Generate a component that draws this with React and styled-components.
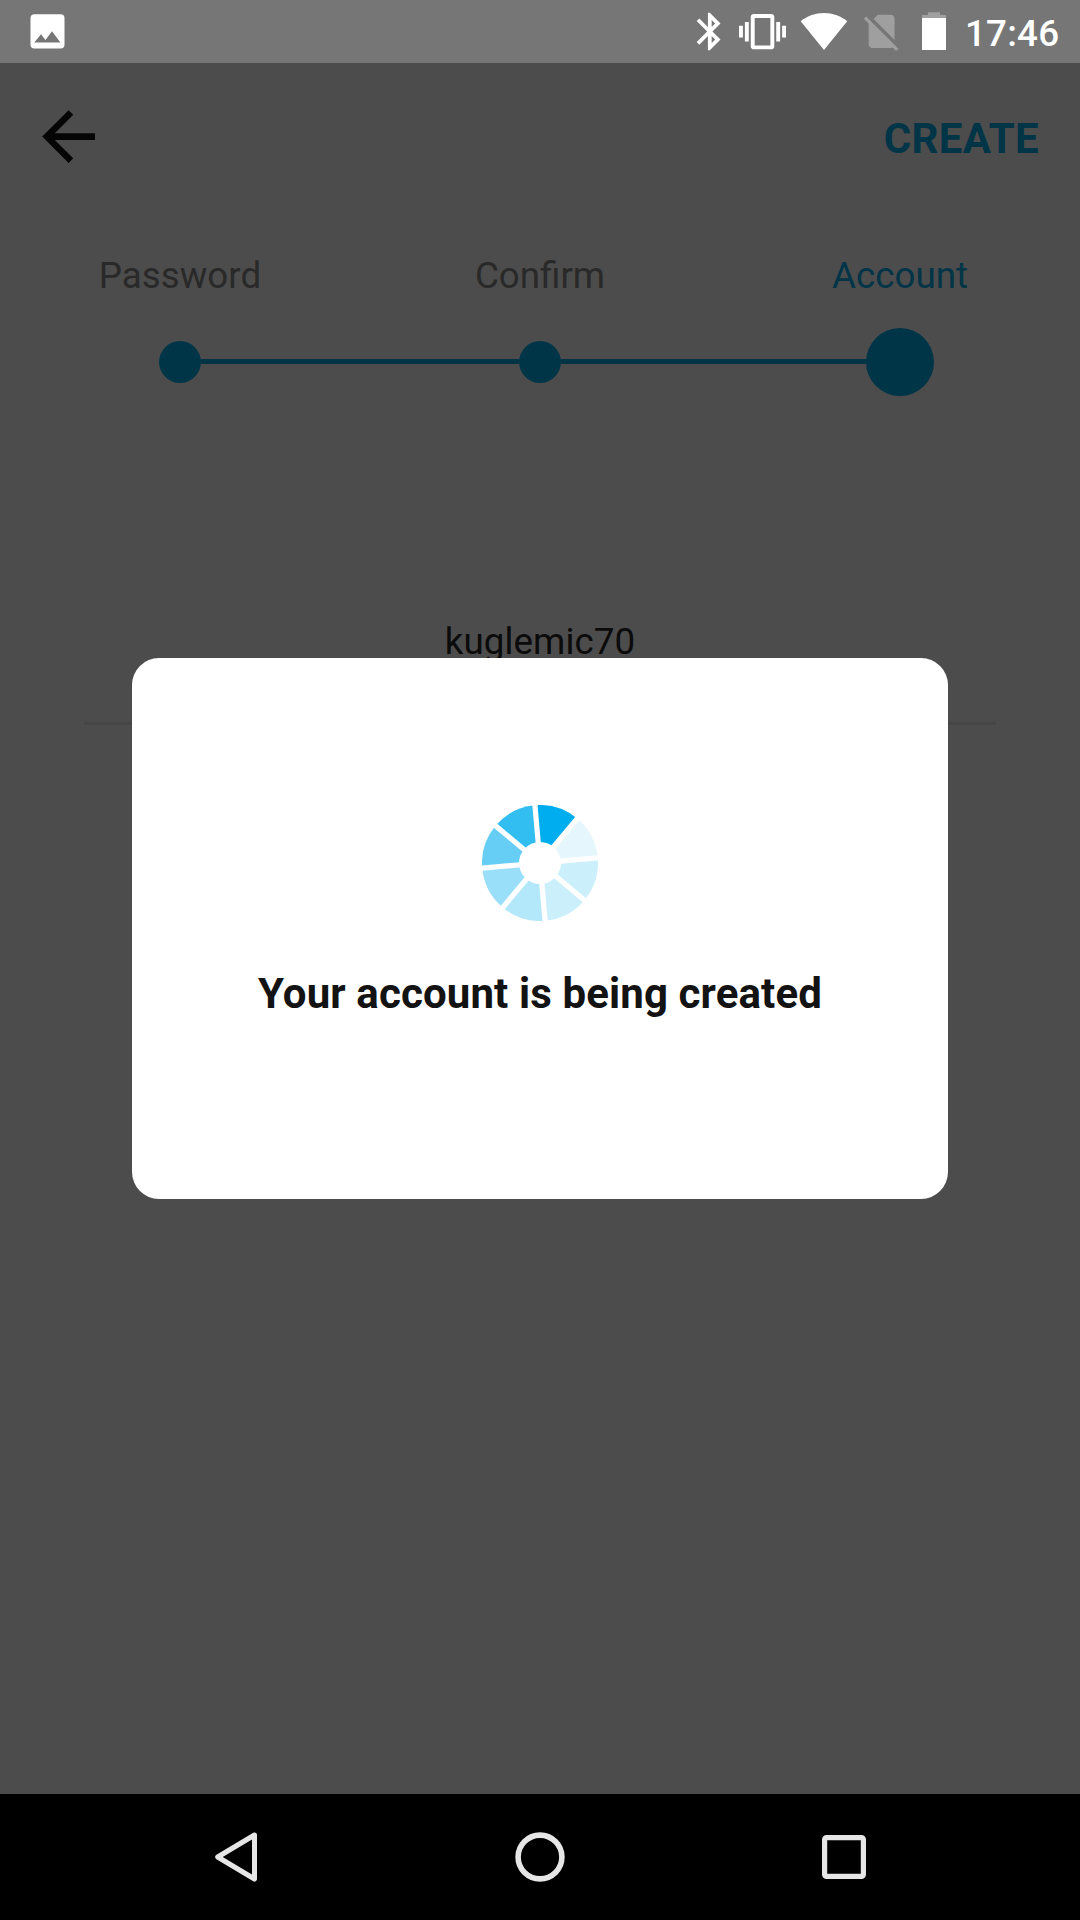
import React from "react";
import styled, { createGlobalStyle } from "styled-components";

const GlobalStyle = createGlobalStyle`
  * { box-sizing: border-box; }
  body { margin: 0; background: #000; font-family: Roboto, "Liberation Sans", sans-serif; }
  svg { display: block; flex: none; }
`;

const Phone = styled.div`
  width: 1080px;
  height: 1920px;
  display: flex;
  flex-direction: column;
  overflow: hidden;
`;

const StatusBar = styled.header`
  height: 63px;
  flex: none;
  display: flex;
  align-items: flex-start;
  background: #767676;
  color: #fff;
`;

const StatusIcon = styled.svg`
  width: ${(p) => p.$width}px;
  height: 63px;
  margin-left: ${(p) => p.$gap}px;
  fill: #fff;
`;

const Clock = styled.time`
  margin-left: 19px;
  font-size: 36.75px;
  font-weight: 500;
  letter-spacing: 0.2px;
  line-height: 63px;
  padding-top: 2px;
`;

const Screen = styled.main`
  position: relative;
  flex: 1;
  display: flex;
  flex-direction: column;
  background: #fff;
`;

const Toolbar = styled.nav`
  height: 147px;
  flex: none;
  display: flex;
  align-items: center;
  justify-content: space-between;
  padding: 0 41px 0 29px;
`;

const IconButton = styled.button`
  border: 0;
  padding: 0;
  background: none;
  color: #131314;
`;

const TextButton = styled.button`
  border: 0;
  padding: 4px 0 0;
  background: none;
  color: #00adef;
  font: 700 42px/50px Roboto, "Liberation Sans", sans-serif;
  letter-spacing: 0.3px;
`;

const Steps = styled.ol`
  margin: 0;
  padding: 0;
  height: 200px;
  list-style: none;
  display: grid;
  grid-template-columns: repeat(3, 360px);
`;

const Step = styled.li`
  display: flex;
  flex-direction: column;
  align-items: center;
  padding-top: 44px;
  color: ${(p) => (p.$active ? "#00adef" : "#8a8a8a")};
  font-size: 36.75px;
  line-height: 44px;
`;

const Track = styled.div`
  width: 100%;
  height: 68px;
  margin-top: 30px;
  display: grid;
  grid-template-columns: 1fr auto 1fr;
  align-items: center;
`;

const Segment = styled.span`
  align-self: start;
  height: 5px;
  margin-top: 31px;
  background: ${(p) => (p.$shown ? "#00adef" : "transparent")};
`;

const Dot = styled.span`
  width: ${(p) => p.$size}px;
  height: ${(p) => p.$size}px;
  margin: 0 -2px;
  border-radius: 50%;
  background: #00adef;
`;

const Field = styled.div`
  margin: 210px 84px 0;
  height: 105px;
  border-bottom: 3px solid #e9e9e9;
  color: #262627;
  text-align: center;
  font-size: 36.75px;
  letter-spacing: 0.1px;
  line-height: 44px;
`;

const Scrim = styled.div`
  position: absolute;
  inset: 0;
  display: flex;
  justify-content: center;
  align-items: center;
  background: rgba(0, 0, 0, 0.7);
`;

const Dialog = styled.section`
  width: 816px;
  height: 541px;
  border-radius: 27px;
  background: #fff;
  display: flex;
  flex-direction: column;
  align-items: center;
  padding-top: 147px;
`;

const Message = styled.p`
  margin: 48px 0 0;
  color: #131314;
  font-size: 42px;
  font-weight: 700;
  letter-spacing: 0.12px;
  line-height: 50px;
`;

const NavBar = styled.footer`
  height: 126px;
  flex: none;
  background: #000;
  display: flex;
  align-items: center;
  justify-content: center;
  gap: 244px;
`;

const NavIcon = styled.svg`
  width: 60px;
  height: 60px;
  fill: none;
  stroke: #e6e6e6;
  stroke-linejoin: round;
`;

const steps = [
  { label: "Password", size: 42 },
  { label: "Confirm", size: 42 },
  { label: "Account", size: 68, active: true },
];

const wedgeColors = ["#00adef", "#e5f7fd", "#ccf0fb", "#ccf0fb", "#b2e8fa", "#99dff9", "#66cef5", "#33bef2"];

const polar = (radius, degrees) => {
  const a = (degrees * Math.PI) / 180;
  return `${(radius * Math.sin(a)).toFixed(2)} ${(-radius * Math.cos(a)).toFixed(2)}`;
};

function Spinner() {
  return (
    <svg width="116" height="116" viewBox="-58 -58 116 116">
      {wedgeColors.map((color, i) => {
        const start = -5 + i * 45;
        return (
          <path key={i} fill={color} d={`M0 0L${polar(58, start)}A58 58 0 0 1 ${polar(58, start + 45)}Z`} />
        );
      })}
      {wedgeColors.map((_, i) => (
        <path key={i} stroke="#fff" strokeWidth="5.2" d={`M0 0L${polar(60, -5 + i * 45)}`} />
      ))}
      <circle r="21" fill="#fff" />
    </svg>
  );
}

export default function App() {
  return (
    <Phone>
      <GlobalStyle />
      <StatusBar>
        <StatusIcon $width={36} $gap={30} viewBox="30 0 36 63">
          <path fillRule="evenodd" d="M34.5 14.2H60.5Q64.5 14.2 64.5 18.2V44.5Q64.5 48.5 60.5 48.5H34.5Q30.5 48.5 30.5 44.5V18.2Q30.5 14.2 34.5 14.2ZM34.3 42.6H60.4L52 31.3L45.4 39.9L41 34.2Z" />
        </StatusIcon>
        <StatusIcon $width={45} $gap={621} viewBox="0 0 45 63">
          <path transform="translate(0.3 9) scale(1.875)" d="M17.71 7.71L12 2h-1v7.59L6.41 5 5 6.41 10.59 12 5 17.59 6.41 19 11 14.41V22h1l5.71-5.71-4.3-4.29 4.3-4.29zM13 5.83l1.88 1.88L13 9.59V5.83zm1.88 10.46L13 18.17v-3.76l1.88 1.88z" />
        </StatusIcon>
        <StatusIcon $width={47} $gap={7} viewBox="0 0 47 63">
          <path transform="translate(0 8.2) scale(1.96)" d="M0 15h2V9H0v6zm3 2h2V7H3v10zm19-8v6h2V9h-2zm-3 8h2V7h-2v10zM16.5 3h-9C6.67 3 6 3.67 6 4.5v15c0 .83.67 1.5 1.5 1.5h9c.83 0 1.5-.67 1.5-1.5v-15c0-.83-.67-1.5-1.5-1.5zM16 19H8V5h8v14z" />
        </StatusIcon>
        <StatusIcon $width={48} $gap={14} viewBox="800 0 48 63">
          <path d="M800.7 21.3C814 10.2 834 10.2 847.2 21.3L824 50Z" />
        </StatusIcon>
        <StatusIcon $width={45} $gap={11} viewBox="0 0 45 63">
          <path fill="#9f9f9f" transform="translate(0.4 9.2) scale(1.85)" d="M18.99 5c0-1.1-.89-2-1.99-2h-7L7.66 5.34 19 16.68 18.99 5zM3.65 3.88L2.38 5.15 5 7.77V19c0 1.1.9 2 2 2h10.01c.35 0 .67-.1.96-.26l1.88 1.88 1.27-1.27L3.65 3.88z" />
        </StatusIcon>
        <StatusIcon $width={24} $gap={18} viewBox="922 0 24 63">
          <path fill="#a0a0a0" d="M928 12.3H940V15H946V18H922V15H928Z" />
          <path d="M922 18H946V50H922Z" />
        </StatusIcon>
        <Clock>17:46</Clock>
      </StatusBar>

      <Screen>
        <Toolbar>
          <IconButton aria-label="Back">
            <svg width="79.2" height="79.2" viewBox="0 0 24 24" fill="currentColor">
              <path d="M20 11H7.83l5.59-5.59L12 4l-8 8 8 8 1.41-1.41L7.83 13H20v-2z" />
            </svg>
          </IconButton>
          <TextButton>CREATE</TextButton>
        </Toolbar>
        <Steps>
          {steps.map((step, i) => (
            <Step key={step.label} $active={step.active}>
              {step.label}
              <Track>
                <Segment $shown={i > 0} />
                <Dot $size={step.size} />
                <Segment $shown={i < steps.length - 1} />
              </Track>
            </Step>
          ))}
        </Steps>
        <Field>kuglemic70</Field>
        <Scrim>
          <Dialog role="dialog">
            <Spinner />
            <Message>Your account is being created</Message>
          </Dialog>
        </Scrim>
      </Screen>

      <NavBar>
        <NavIcon viewBox="206 1827 60 60">
          <path strokeWidth="5" d="M254.5 1835L217.7 1857L254.5 1879Z" />
        </NavIcon>
        <NavIcon viewBox="510 1827 60 60">
          <circle cx="540" cy="1857" r="21.9" strokeWidth="5.6" />
        </NavIcon>
        <NavIcon viewBox="814 1827 60 60">
          <rect x="824.6" y="1837.6" width="38.8" height="38.8" rx="2" strokeWidth="5.2" />
        </NavIcon>
      </NavBar>
    </Phone>
  );
}
